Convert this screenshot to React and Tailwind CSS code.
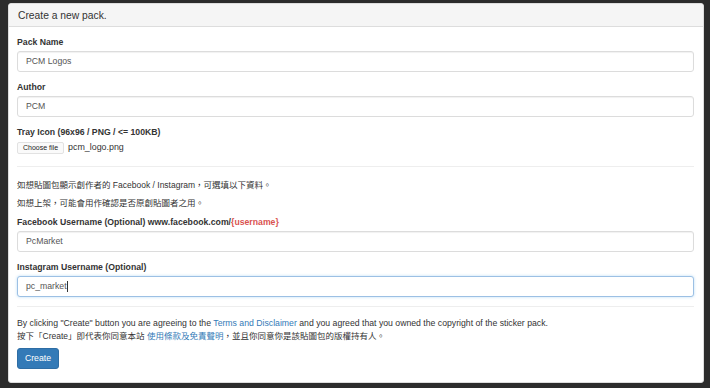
import React from "react";

const font = { fontFamily: '"Liberation Sans", "Noto Sans CJK TC", Arial, sans-serif' };

function Field({ label, value, focused, cursor }) {
  return (
    <div className="mb-[9px]">
      <div className="h-[12px] leading-[12px] text-[8.7px] font-bold text-[#333] mb-[3px]">{label}</div>
      <div
        className={
          "h-[21px] rounded-[3px] border bg-white flex items-center px-[8px] text-[8.7px] text-[#555] " +
          (focused
            ? "border-[#9cc0e4] shadow-[0_0_3px_rgba(102,175,233,0.45)]"
            : "border-[#dcdcdc] shadow-[inset_0_1px_1px_rgba(0,0,0,0.06)]")
        }
      >
        <span>{value}</span>
        {cursor && <span className="inline-block w-px h-[11px] bg-[#333]" />}
      </div>
    </div>
  );
}

export default function App() {
  return (
    <div className="w-[710px] h-[388px] bg-[#2c2c2c] pt-[3px] pl-[8px] pr-[6px]" style={font}>
      <div className="h-[380px] bg-white border border-[#ddd] rounded-[3px] overflow-hidden flex flex-col">
        <div className="h-[23px] bg-[#f5f5f5] border-b border-[#ddd] flex items-center px-[9px] pt-[1px] text-[10.3px] text-[#333]">
          Create a new pack.
        </div>
        <div className="px-[8px] pt-[9px] pr-[9px]">
          <Field label="Pack Name" value="PCM Logos" />
          <Field label="Author" value="PCM" />
          <div className="h-[12px] leading-[12px] text-[8.7px] font-bold text-[#333] mb-[4px]">
            Tray Icon (96x96 / PNG / &lt;= 100KB)
          </div>
          <div className="flex items-center gap-[4px] h-[12px]">
            <div className="h-[12px] px-[5px] flex items-center rounded-[2px] border border-[#e2e2e2] bg-[#fafafa] text-[7px] text-[#222]">
              Choose file
            </div>
            <span className="text-[8.9px] text-[#333]">pcm_logo.png</span>
          </div>
          <div className="mt-[12px] border-t border-[#eee]" />
          <div className="pt-[11px] text-[8.5px] text-[#333]">
            <p className="h-[14px] leading-[14px]">如想貼圖包顯示創作者的 Facebook / Instagram，可選填以下資料。</p>
            <p className="h-[14px] leading-[14px] mt-[4px]">如想上架，可能會用作確認是否原創貼圖者之用。</p>
          </div>
          <div className="mt-[6px]">
            <Field
              label={
                <>
                  Facebook Username (Optional) www.facebook.com/<span className="text-[#d9534f]">{"{username}"}</span>
                </>
              }
              value="PcMarket"
            />
            <Field label="Instagram Username (Optional)" value="pc_market" focused cursor />
          </div>
          <div className="mt-[5px] border-t border-[#eee]" />
          <div className="pt-[10px] text-[#333]">
            <p className="h-[13px] leading-[13px] text-[8.7px]">
              By clicking "Create" button you are agreeing to the{" "}
              <span className="text-[#337ab7]">Terms and Disclaimer</span> and you agreed that you owned the copyright of the sticker pack.
            </p>
            <p className="h-[13px] leading-[13px] text-[8.5px]">
              按下「Create」即代表你同意本站 <span className="text-[#337ab7]">使用條款及免責聲明</span>，並且你同意你是該貼圖包的版權持有人。
            </p>
          </div>
          <div className="mt-[5px] w-[42px] h-[21px] rounded-[3px] bg-[#337ab7] border border-[#2e6da4] flex items-center justify-center text-[8.7px] text-white">
            Create
          </div>
        </div>
      </div>
    </div>
  );
}
